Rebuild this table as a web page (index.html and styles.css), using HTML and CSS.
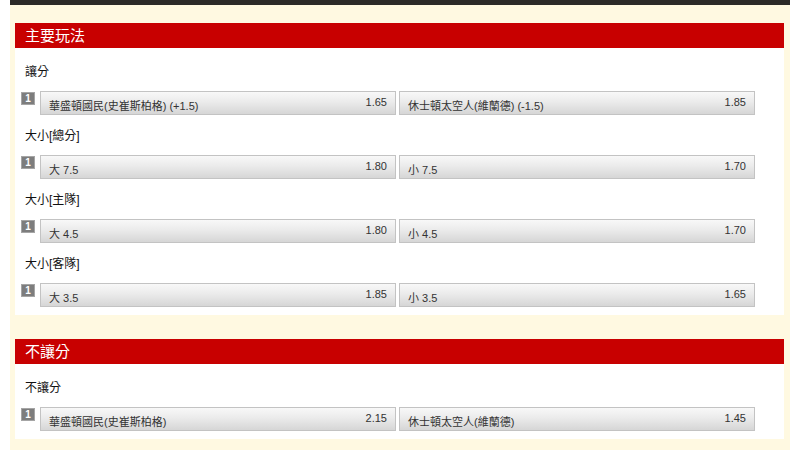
FILE: index.html
```html
<!DOCTYPE html>
<html lang="zh-Hant">
<head>
<meta charset="utf-8">
<title>玩法</title>
<link rel="stylesheet" href="styles.css">
</head>
<body>
<div class="page">
  <section class="section">
    <h2 class="section-title">主要玩法</h2>
    <div class="panel">
      <div class="market">
        <div class="market-label">讓分</div>
        <div class="row">
          <span class="badge">1</span>
          <div class="bet"><span class="name">華盛頓國民(史崔斯柏格) (+1.5)</span><span class="odds">1.65</span></div>
          <div class="bet"><span class="name">休士頓太空人(維蘭德) (-1.5)</span><span class="odds">1.85</span></div>
        </div>
      </div>
      <div class="market">
        <div class="market-label">大小[總分]</div>
        <div class="row">
          <span class="badge">1</span>
          <div class="bet"><span class="name">大 7.5</span><span class="odds">1.80</span></div>
          <div class="bet"><span class="name">小 7.5</span><span class="odds">1.70</span></div>
        </div>
      </div>
      <div class="market">
        <div class="market-label">大小[主隊]</div>
        <div class="row">
          <span class="badge">1</span>
          <div class="bet"><span class="name">大 4.5</span><span class="odds">1.80</span></div>
          <div class="bet"><span class="name">小 4.5</span><span class="odds">1.70</span></div>
        </div>
      </div>
      <div class="market">
        <div class="market-label">大小[客隊]</div>
        <div class="row">
          <span class="badge">1</span>
          <div class="bet"><span class="name">大 3.5</span><span class="odds">1.85</span></div>
          <div class="bet"><span class="name">小 3.5</span><span class="odds">1.65</span></div>
        </div>
      </div>
    </div>
  </section>
  <section class="section">
    <h2 class="section-title">不讓分</h2>
    <div class="panel">
      <div class="market">
        <div class="market-label">不讓分</div>
        <div class="row">
          <span class="badge">1</span>
          <div class="bet"><span class="name">華盛頓國民(史崔斯柏格)</span><span class="odds">2.15</span></div>
          <div class="bet"><span class="name">休士頓太空人(維蘭德)</span><span class="odds">1.45</span></div>
        </div>
      </div>
    </div>
  </section>
</div>
</body>
</html>
```
FILE: styles.css
```css
html, body {
  margin: 0;
  padding: 0;
  background: #ffffff;
}
body {
  font-family: "Liberation Sans", "Noto Sans CJK TC", sans-serif;
  color: #000;
}
.page {
  margin-left: 10px;
  width: 780px;
  height: 450px;
  box-sizing: border-box;
  background: #fff9e1;
  border-top: 5px solid #2c2a27;
  padding: 18px 6px 0 5px;
  overflow: hidden;
}
.section {
  margin-bottom: 24px;
}
.section-title {
  margin: 0;
  height: 25px;
  line-height: 25px;
  padding-left: 10px;
  background: #c80000;
  color: #ffffff;
  font-size: 15px;
  font-weight: normal;
}
.panel {
  background: #ffffff;
  padding: 14px 0 8px;
  display: flex;
  flex-direction: column;
  gap: 11px;
}
.market-label {
  height: 20px;
  line-height: 20px;
  padding-left: 10px;
  font-size: 12px;
  color: #111;
  margin-bottom: 9px;
}
.row {
  display: flex;
  align-items: flex-start;
  padding-left: 6px;
}
.badge {
  width: 14px;
  height: 13px;
  margin-top: 1px;
  margin-right: 5px;
  background: #7d7d7d;
  border: 1px solid #a5a5a5;
  box-sizing: border-box;
  color: #fff;
  font-size: 10px;
  font-weight: bold;
  line-height: 11px;
  text-align: center;
}
.bet {
  width: 356px;
  height: 24px;
  box-sizing: border-box;
  border: 1px solid #c3c3c3;
  background: linear-gradient(#f8f8f8, #ebebeb 45%, #d6d6d6);
  display: flex;
  justify-content: space-between;
  padding: 0 8px;
  font-size: 11px;
  color: #333;
}
.bet + .bet {
  margin-left: 3px;
}
.name {
  align-self: flex-end;
  line-height: 16px;
}
.odds {
  align-self: flex-start;
  padding-top: 3px;
  line-height: 14px;
}
```
